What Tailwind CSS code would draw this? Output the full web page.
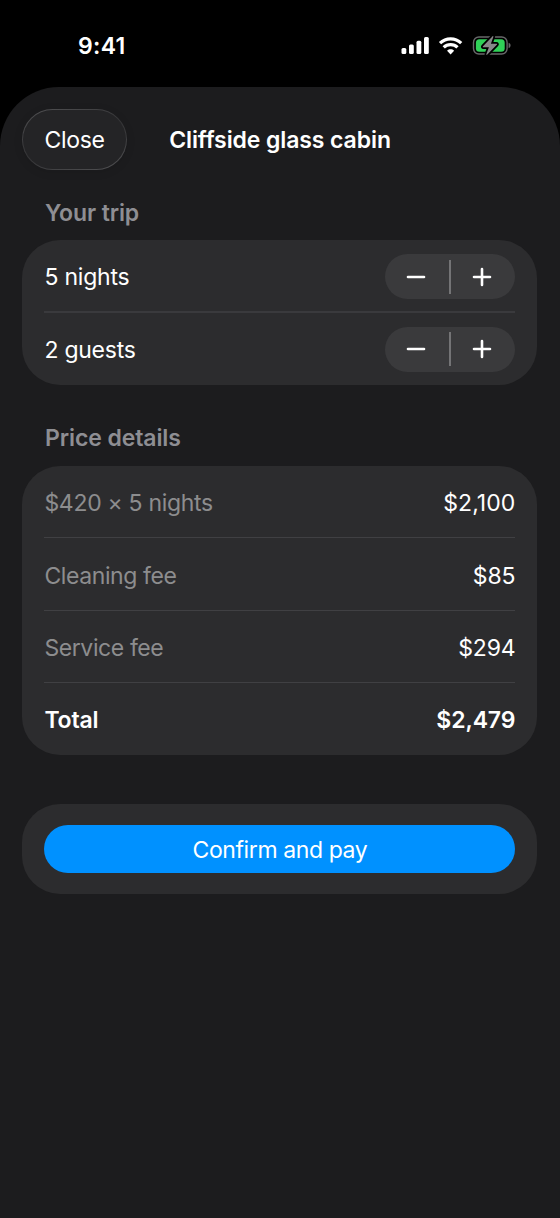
<!DOCTYPE html>
<html lang="en">
<head>
<meta charset="utf-8">
<title>Cliffside glass cabin</title>
<script src="https://cdn.jsdelivr.net/npm/@tailwindcss/browser@4"></script>
</head>
<body class="bg-black">
<div class="flex h-[1218px] w-[560px] flex-col overflow-hidden bg-black font-['Inter',sans-serif] text-[23px] leading-7 text-white">
  <header class="flex h-[87px] shrink-0 items-start justify-between pt-8 pr-[49px] pl-[78px]">
    <span class="text-[23px] font-semibold tracking-[0.3px]">9:41</span>
    <div class="flex h-7 items-center">
      <svg class="h-[28px] w-[110px]" viewBox="401 32 110 28" fill="none">
        <g fill="#fff">
          <rect x="401.5" y="48" width="4.8" height="6.1" rx="1.5"/>
          <rect x="409" y="44.4" width="4.8" height="9.7" rx="1.5"/>
          <rect x="416.5" y="40.8" width="4.8" height="13.3" rx="1.5"/>
          <rect x="424" y="37" width="4.8" height="17.1" rx="1.5"/>
        </g>
        <g stroke="#fff" stroke-width="3.2">
          <path d="M440 43.2a15.2 15.2 0 0 1 21.2 0"/>
          <path d="M443.7 47.4a9.8 9.8 0 0 1 13.8 0"/>
        </g>
        <path fill="#fff" d="M450.6 54.4l-3.5-3.7c1.9-1.8 5.1-1.8 7 0z"/>
        <rect x="473.5" y="37" width="33.6" height="17" rx="5.4" stroke="#68686a" stroke-width="1.4"/>
        <path fill="#68686a" d="M508.6 42.8c2.6.9 2.6 4.5 0 5.4z"/>
        <rect x="475.9" y="39.3" width="28.8" height="12.4" rx="3.5" fill="#30d158"/>
        <path d="M492.4 36.4l-9.4 9.8c-.5.5-.2 1.1.5 1.1h5.4l-2.5 6.7c-.3.9.3 1.2.9.6l9.5-9.8c.5-.5.2-1.1-.5-1.1h-5.4l2.4-6.7c.3-.9-.3-1.2-.9-.6z" fill="#88888a" stroke="#000" stroke-width="3.6" paint-order="stroke"/>
      </svg>
    </div>
  </header>

  <main class="flex grow flex-col rounded-t-[59px] bg-[#1c1c1e] px-[22px] pt-[22px]">
    <div class="grid h-[61px] grid-cols-[105px_1fr_105px] items-center">
      <div class="h-[61px] rounded-[30.5px] bg-linear-160 from-[#525254] via-[#343436] to-[#525254] p-px shadow-[0_2px_10px_rgba(0,0,0,0.1)]">
        <button class="h-[59px] w-full rounded-[29.5px] bg-[#242426] tracking-[-0.35px]">Close</button>
      </div>
      <h1 class="text-center font-semibold tracking-[-0.1px]">Cliffside glass cabin</h1>
    </div>

    <h2 class="mt-[29px] pl-[23px] font-semibold tracking-[-0.1px] text-[#8e8e93]">Your trip</h2>
    <section class="mt-[13px] mr-[0.6px] ml-[0.4px] flex h-[145px] flex-col rounded-[38px] bg-[#2c2c2e] px-[22px]">
      <div class="flex h-[71px] items-center justify-between pt-0.5">
        <span class="tracking-[-0.2px]">5 nights</span>
        <div class="mr-[0.4px] flex h-[45px] w-[130px] items-center rounded-full bg-[#3a3a3c]">
          <button class="flex grow justify-center pr-0.5" aria-label="Fewer nights"><svg class="size-5" viewBox="0 0 20 20" stroke="#fff" stroke-width="2.6" stroke-linecap="round"><path d="M2 10h16"/></svg></button>
          <span class="h-[34px] w-[1.5px] bg-[#747476]"></span>
          <button class="flex grow justify-center pr-0.5" aria-label="More nights"><svg class="size-5" viewBox="0 0 20 20" stroke="#fff" stroke-width="2.6" stroke-linecap="round"><path d="M2 10h16M10 2v16"/></svg></button>
        </div>
      </div>
      <div class="h-[2px] bg-[#3a3a3d]"></div>
      <div class="flex h-[72px] items-center justify-between">
        <span class="pt-px tracking-[-0.25px]">2 guests</span>
        <div class="mr-[0.4px] flex h-[45px] w-[130px] items-center rounded-full bg-[#3a3a3c]">
          <button class="flex grow justify-center pr-0.5" aria-label="Fewer guests"><svg class="size-5" viewBox="0 0 20 20" stroke="#fff" stroke-width="2.6" stroke-linecap="round"><path d="M2 10h16"/></svg></button>
          <span class="h-[34px] w-[1.5px] bg-[#747476]"></span>
          <button class="flex grow justify-center pr-0.5" aria-label="More guests"><svg class="size-5" viewBox="0 0 20 20" stroke="#fff" stroke-width="2.6" stroke-linecap="round"><path d="M2 10h16M10 2v16"/></svg></button>
        </div>
      </div>
    </section>

    <h2 class="mt-[39px] mb-px pl-[23px] font-semibold tracking-[-0.1px] text-[#8e8e93]">Price details</h2>
    <section class="mt-[13px] mr-[0.6px] ml-[0.4px] flex h-[289.4px] flex-col rounded-[38px] bg-[#2c2c2e] px-[22px]">
      <div class="flex h-[72.4px] items-center justify-between border-b border-[#404043] pt-0.5">
        <span class="tracking-[-0.3px] text-[#8d8d8e]">$420 × 5 nights</span><span class="tracking-[0.05px]">$2,100</span>
      </div>
      <div class="flex h-[72.4px] items-center justify-between border-b border-[#404043] pt-[3px]">
        <span class="tracking-[-0.4px] text-[#8d8d8e]">Cleaning fee</span><span class="tracking-[-0.1px]">$85</span>
      </div>
      <div class="flex h-[72.4px] items-center justify-between border-b border-[#404043] pt-[3px]">
        <span class="tracking-[-0.4px] text-[#8d8d8e]">Service fee</span><span class="tracking-[-0.2px]">$294</span>
      </div>
      <div class="flex h-[72.2px] items-center justify-between pt-px font-semibold">
        <span class="tracking-[-0.2px]">Total</span><span class="tracking-[-0.1px]">$2,479</span>
      </div>
    </section>

    <section class="mt-[49px] mr-[0.6px] ml-[0.4px] flex h-[89.5px] items-center rounded-[38px] bg-[#2c2c2e] px-[22px]">
      <button class="h-[48px] w-full rounded-full bg-[#0091ff] pt-px tracking-[-0.4px]">Confirm and pay</button>
    </section>
  </main>
</div>
</body>
</html>
